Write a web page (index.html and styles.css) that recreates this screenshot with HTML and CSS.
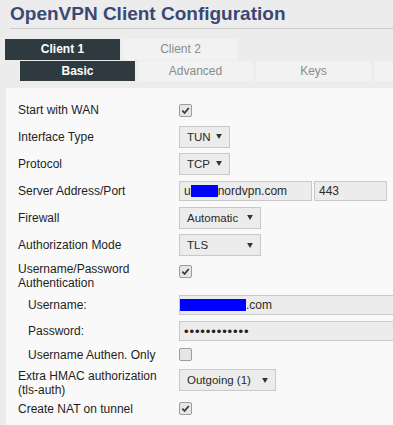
FILE: index.html
```html
<!DOCTYPE html>
<html>
<head>
<meta charset="utf-8">
<link rel="stylesheet" href="styles.css">
</head>
<body>
<div class="header"><h1 class="title">OpenVPN Client Configuration</h1></div>
<div class="tabs tabs-main">
  <div class="tab active">Client 1</div>
  <div class="tab">Client 2</div>
</div>
<div class="tabs tabs-sub">
  <div class="tab active">Basic</div>
  <div class="tab">Advanced</div>
  <div class="tab">Keys</div>
  <div class="tab stub"></div>
</div>
<div class="panel">
  <div class="row h26"><div class="label">Start with WAN</div><div class="field"><span class="cb on"><svg viewBox="0 0 10 10"><path d="M1.5 5.2 L4 7.8 L8.6 2.2" /></svg></span></div></div>
  <div class="row h27"><div class="label">Interface Type</div><div class="field"><div class="sel w51"><span>TUN</span><svg class="arr" viewBox="0 0 7 6"><path d="M0 0H7L3.5 6Z"/></svg></div></div></div>
  <div class="row h27"><div class="label">Protocol</div><div class="field"><div class="sel w51"><span>TCP</span><svg class="arr" viewBox="0 0 7 6"><path d="M0 0H7L3.5 6Z"/></svg></div></div></div>
  <div class="row h27"><div class="label">Server Address/Port</div><div class="field"><div class="inp w133"><span>u</span><span class="redact r1"></span><span>nordvpn.com</span></div><div class="inp w73">443</div></div></div>
  <div class="row h27"><div class="label">Firewall</div><div class="field"><div class="sel w82"><span>Automatic</span><svg class="arr" viewBox="0 0 7 6"><path d="M0 0H7L3.5 6Z"/></svg></div></div></div>
  <div class="row h28"><div class="label">Authorization Mode</div><div class="field"><div class="sel w82"><span>TLS</span><svg class="arr" viewBox="0 0 7 6"><path d="M0 0H7L3.5 6Z"/></svg></div></div></div>
  <div class="row h32 top"><div class="label two">Username/Password<br>Authentication</div><div class="field"><span class="cb on"><svg viewBox="0 0 10 10"><path d="M1.5 5.2 L4 7.8 L8.6 2.2" /></svg></span></div></div>
  <div class="row h27"><div class="label sub">Username:</div><div class="field"><div class="inp wide nopad"><span class="redact r2"></span><span>.com</span></div></div></div>
  <div class="row h26"><div class="label sub">Password:</div><div class="field"><div class="inp wide dots">••••••••••••</div></div></div>
  <div class="row h21"><div class="label sub">Username Authen. Only</div><div class="field"><span class="cb"></span></div></div>
  <div class="row h33 top"><div class="label two">Extra HMAC authorization<br>(tls-auth)</div><div class="field"><div class="sel w97"><span>Outgoing (1)</span><svg class="arr" viewBox="0 0 7 6"><path d="M0 0H7L3.5 6Z"/></svg></div></div></div>
  <div class="row h21"><div class="label">Create NAT on tunnel</div><div class="field"><span class="cb on"><svg viewBox="0 0 10 10"><path d="M1.5 5.2 L4 7.8 L8.6 2.2" /></svg></span></div></div>
</div>
</body>
</html>
```
FILE: styles.css
```css
html, body {
  margin: 0;
  padding: 0;
  background: #ececec;
  font-family: "Liberation Sans", Arial, sans-serif;
  font-size: 12px;
  color: #1e1e1e;
  overflow: hidden;
  width: 393px;
  height: 425px;
}
.header {
  padding-top: 3px;
  margin-left: 10px;
}
.title {
  margin: 0;
  font-size: 19px;
  line-height: 22px;
  font-weight: bold;
  color: #3b4873;
  padding-bottom: 3px;
  border-bottom: 1px solid #cdcdcd;
  white-space: nowrap;
}
.tabs {
  display: flex;
  gap: 3px;
  overflow: hidden;
}
.tabs-main {
  margin-top: 10px;
  padding-left: 5px;
}
.tabs-sub {
  margin-top: 1px;
  padding-left: 20px;
}
.tab {
  flex: 0 0 115px;
  height: 21px;
  line-height: 21px;
  text-align: center;
  background: #f2f2f2;
  color: #8a8a8a;
  font-size: 12px;
}
.tabs-sub .tab {
  height: 20px;
  line-height: 20px;
}
.tab.active {
  background: #2e3a40;
  color: #ffffff;
  font-weight: bold;
}
.panel {
  margin-top: 7px;
  margin-left: 6px;
  background: #f9f9f9;
  padding: 9px 0 0 12px;
  height: 328px;
  overflow: hidden;
}
.row {
  display: flex;
  align-items: center;
}
.row.top { align-items: flex-start; }
.h21 { height: 21px; }
.h26 { height: 26px; }
.h27 { height: 27px; }
.h28 { height: 28px; }
.h32 { height: 32px; }
.h33 { height: 33px; }
.label {
  flex: 0 0 161px;
  line-height: 14px;
  white-space: nowrap;
}
.label.sub { padding-left: 10px; box-sizing: border-box; }
.h32 .label { padding-top: 3px; }
.h32 .field { padding-top: 6px; }
.h33 .label { padding-top: 4px; }
.h33 .field { padding-top: 4px; }
.field {
  display: flex;
  gap: 2px;
  align-items: center;
}
.cb {
  display: inline-block;
  width: 11px;
  height: 11px;
  border: 1px solid #9c9c9c;
  border-radius: 2px;
  background: #e6e6e6;
  position: relative;
}
.cb svg {
  position: absolute;
  left: 1px;
  top: 1px;
  width: 9px;
  height: 9px;
}
.cb svg path {
  fill: none;
  stroke: #3a3a3a;
  stroke-width: 2;
}
.sel {
  box-sizing: border-box;
  height: 22px;
  border: 1px solid #c8c8c8;
  background: #ececec;
  display: flex;
  align-items: center;
  justify-content: space-between;
  padding: 0 7px 0 7px;
  color: #2a2a2a;
  font-size: 11.5px;
}
.arr {
  width: 6px;
  height: 5px;
  fill: #333;
  flex: 0 0 auto;
}
.w51 { width: 51px; }
.w82 { width: 82px; }
.w97 { width: 97px; }
.inp {
  box-sizing: border-box;
  height: 20px;
  border: 1px solid #c8c8c8;
  background: #ececec;
  display: flex;
  align-items: center;
  padding: 0 4px;
  color: #2a2a2a;
  white-space: nowrap;
}
.w133 { width: 133px; }
.w73 { width: 73px; }
.wide { width: 214px; border-right: none; }
.nopad { padding-left: 0; }
.redact {
  display: inline-block;
  background: #0000ff;
}
.r1 { width: 27px; height: 12px; }
.r2 { width: 66px; height: 12px; margin-top: 1px; }
.dots {
  font-size: 13px;
  letter-spacing: 0.9px;
  color: #222;
}
```
